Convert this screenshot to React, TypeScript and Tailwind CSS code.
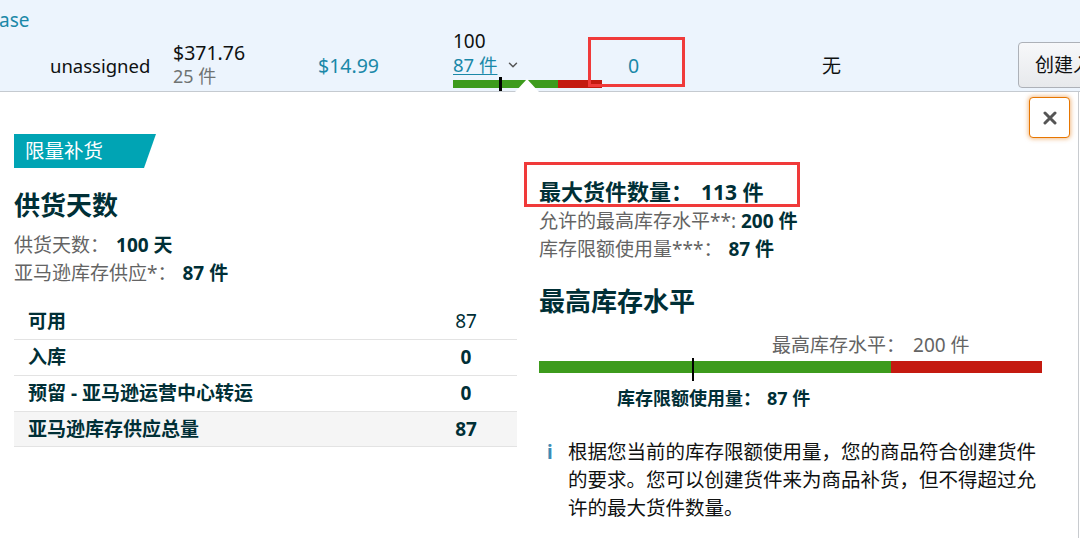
import { ChevronDown } from "lucide-react";

export default function App() {
  return (
    <div className="w-[1080px] h-[538px] overflow-hidden bg-white font-['Noto_Sans','Noto_Sans_CJK_SC',sans-serif] text-[#002f36]">
      {/* table row */}
      <div className="relative h-[92px] bg-[#ecf4fd] border-b border-[#c5cad0]">
        <div className="h-[28px] pt-[8px] text-[19px] leading-[24px] text-[#1a88a8] -ml-[1px]">ase</div>
        <div className="flex h-[63px]">
          <div className="w-[50px] shrink-0" />
          <div className="w-[123px] shrink-0 mt-[26px] text-[18.5px] leading-[24px] text-[#0f1111]">unassigned</div>
          <div className="w-[145px] shrink-0 mt-[13px]">
            <div className="text-[19.5px] leading-[24px] text-[#0f1111]">$371.76</div>
            <div className="text-[18px] leading-[23px] text-[#6f7373]">25 件</div>
          </div>
          <div className="w-[135px] shrink-0 mt-[26px] text-[19.5px] leading-[24px] text-[#1a88a8]">$14.99</div>
          <div className="w-[149px] shrink-0 mt-[1px]">
            <div className="text-[19px] leading-[24px] text-[#0f1111]">100</div>
            <div className="flex items-center gap-[9px] text-[18.5px] leading-[23px]">
              <span className="text-[#1a88a8] underline underline-offset-2">87 件</span>
              <ChevronDown size={14} strokeWidth={2.5} className="text-[#555]" />
            </div>
            <div className="relative mt-[4px] flex h-[8px] w-[149px]">
              <div className="w-[105px] bg-[#3d9b1d]" />
              <div className="flex-1 bg-[#c41a10]" />
              <div className="absolute left-[46px] -top-[3px] h-[14px] w-[3px] bg-black" />
            </div>
          </div>
          <div className="w-[60px] shrink-0 pl-[26px] mt-[26px] text-[19.5px] leading-[24px] text-[#1a88a8]">0</div>
          <div className="w-[356px] shrink-0 pl-[160px] mt-[26px] text-[19px] leading-[24px] text-[#0f1111]">无</div>
          <div className="mt-[14px] h-[46px] w-[80px] shrink-0 rounded-[4px] border border-[#adb1b8] bg-gradient-to-b from-[#f7f8fa] to-[#e7e9ec] pl-[16px] text-[19px] leading-[44px] text-[#0f1111] whitespace-nowrap overflow-hidden">
            创建入库
          </div>
        </div>
        {/* annotation box */}
        <div className="absolute left-[588px] top-[37px] h-[50px] w-[97px] border-[3px] border-[#f03a3a]" />
      </div>

      {/* popover */}
      <div className="relative h-[446px] w-[1079px] border-r border-[#c8cbcf] bg-white px-[14px] pt-[42px]">
        <div className="absolute left-[515px] -top-[13px] h-0 w-0 border-l-[12px] border-r-[12px] border-b-[13px] border-l-transparent border-r-transparent border-b-white" />
        <button className="absolute right-[8px] top-[5px] flex h-[41px] w-[41px] items-center justify-center rounded-[4px] border border-[#e77600] bg-white shadow-[0_0_4px_1px_rgba(228,121,17,0.5)]">
          <svg width="14" height="14" viewBox="0 0 14 14">
            <path d="M2 2 L12 12 M12 2 L2 12" stroke="#555" strokeWidth="3" strokeLinecap="round" />
          </svg>
        </button>

        <div className="flex gap-[22px]">
          {/* left */}
          <div className="w-[503px]">
            <div className="h-[34px] w-[142px] bg-[#00a4b4] pl-[11px] text-[19.5px] leading-[34px] text-white [clip-path:polygon(0_0,100%_0,calc(100%-12px)_100%,0_100%)]">
              限量补货
            </div>
            <div className="mt-[21px] text-[26px] font-bold leading-[32px]">供货天数</div>
            <div className="mt-[10px] text-[19px] leading-[28px]">
              <div>
                <span className="text-[#646464]">供货天数：</span>
                <span className="ml-[7px] font-bold">100 天</span>
              </div>
              <div>
                <span className="text-[#646464]">亚马逊库存供应*：</span>
                <span className="ml-[6px] font-bold">87 件</span>
              </div>
            </div>
            <div className="mt-[16px] text-[19px]">
              <div className="flex h-[36px] items-center">
                <div className="flex-1 pl-[14px] font-bold">可用</div>
                <div className="w-[102px] text-center">87</div>
              </div>
              <div className="flex h-[36px] items-center border-t border-[#e3e3e3]">
                <div className="flex-1 pl-[14px] font-bold">入库</div>
                <div className="w-[102px] text-center font-bold">0</div>
              </div>
              <div className="flex h-[36px] items-center border-t border-[#e3e3e3]">
                <div className="flex-1 pl-[14px] font-bold">预留 - 亚马逊运营中心转运</div>
                <div className="w-[102px] text-center font-bold">0</div>
              </div>
              <div className="flex h-[36px] items-center border-t border-b border-[#e3e3e3] bg-[#f5f5f5]">
                <div className="flex-1 pl-[14px] font-bold">亚马逊库存供应总量</div>
                <div className="w-[102px] text-center font-bold">87</div>
              </div>
            </div>
          </div>

          {/* right */}
          <div className="w-[503px] pt-[42px]">
            <div className="relative text-[22px] font-bold leading-[30px]">
              最大货件数量：<span className="ml-[8px] text-[21px]">113 件</span>
              <div className="absolute -left-[15px] -top-[14px] h-[45px] w-[276px] border-[3px] border-[#f03a3a]" />
            </div>
            <div className="text-[19px] leading-[28px]">
              <div>
                <span className="text-[#646464]">允许的最高库存水平**: </span>
                <span className="font-bold">200 件</span>
              </div>
              <div>
                <span className="text-[#646464]">库存限额使用量***：</span>
                <span className="ml-[6px] font-bold">87 件</span>
              </div>
            </div>
            <div className="mt-[22px] text-[26px] font-bold leading-[32px]">最高库存水平</div>
            <div className="mt-[14px] pl-[233px] text-[19px] leading-[28px] text-[#646464]">
              最高库存水平：<span className="ml-[8px]">200 件</span>
            </div>
            <div className="relative mt-[2px] flex h-[12px] w-[503px]">
              <div className="w-[352px] bg-[#3d9b1d]" />
              <div className="flex-1 bg-[#c41a10]" />
              <div className="absolute left-[153px] -top-[3px] h-[23px] w-[2px] bg-black" />
            </div>
            <div className="mt-[13px] pl-[78px] text-[18px] font-bold leading-[24px]">
              库存限额使用量：<span className="ml-[6px]">87 件</span>
            </div>
            <div className="mt-[28px] flex">
              <div className="w-[29px] pl-[8px] text-[19px] font-bold leading-[28px] text-[#3d8bb5]">i</div>
              <div className="w-[474px] text-[19.5px] leading-[28px] text-[#0f1111]">
                根据您当前的库存限额使用量，您的商品符合创建货件的要求。您可以创建货件来为商品补货，但不得超过允许的最大货件数量。
              </div>
            </div>
          </div>
        </div>
      </div>
    </div>
  );
}
